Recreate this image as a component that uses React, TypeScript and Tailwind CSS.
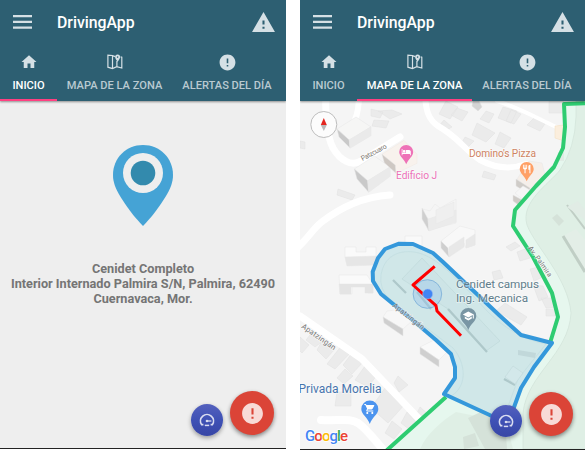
import React from "react";
import { MdHome, MdError, MdWarning, MdHotel, MdRestaurant, MdSchool, MdShoppingCart } from "react-icons/md";

const tabs = [
  { label: "INICIO", width: "w-[57px]" },
  { label: "MAPA DE LA ZONA", width: "w-[115px]" },
  { label: "ALERTAS DEL DÍA", width: "w-[110px]" },
];

function MapIcon() {
  return (
    <svg width="16" height="16" viewBox="0 0 16 16" fill="none" stroke="currentColor" strokeWidth="1.2">
      <path d="M8.2 2.6 5.5 1.5.9 1.2v12l4.6 1.3 4.2-1.8 5.1 1.3V3.2l-1.2-.3M5.5 1.5v13M9.9 7v5.7" />
      <path d="M10.6.6a2.5 2.5 0 0 1 2.5 2.5c0 1.6-2.5 4.8-2.5 4.8S8.1 4.7 8.1 3.1A2.5 2.5 0 0 1 10.6.6z" fill="currentColor" stroke="none" />
      <circle cx="10.6" cy="3.1" r=".8" fill="#2d5f72" stroke="none" />
    </svg>
  );
}

function Header({ active }: { active: number }) {
  return (
    <header className="relative z-10 h-[101px] shrink-0 bg-[#2d5f72] text-[#d5e0e5] shadow-[0_1px_2px_rgba(0,0,0,0.4)]">
      <div className="flex h-[44px] items-center pr-[11px] pl-[13px]">
        <svg width="19" height="14" viewBox="0 0 19 14" fill="currentColor">
          <path d="M0 0h19v2.3H0zM0 5.8h19v2.3H0zM0 11.5h19v2.3H0z" />
        </svg>
        <span className="mt-[2px] ml-[25px] text-[15.8px] font-medium leading-[20px] text-white">DrivingApp</span>
        <MdWarning className="-mr-px ml-auto size-[25px]" />
      </div>
      <div className="flex h-[57px]">
        {tabs.map((tab, i) => (
          <div
            key={tab.label}
            className={`flex shrink-0 flex-col items-center border-b-2 pt-[9px] ${tab.width} ${
              i === active ? "border-[#ff4081]" : "border-transparent"
            }`}
          >
            <div className="flex h-[18px] items-center">
              {i === 0 ? <MdHome className="size-[18px]" /> : i === 1 ? <MapIcon /> : <MdError className="size-[19px]" />}
            </div>
            <span className={`mt-[7px] text-[11.1px] font-medium leading-[16px] whitespace-nowrap ${i === active ? "text-white" : "text-[#b9cad1]"}`}>
              {tab.label}
            </span>
          </div>
        ))}
      </div>
    </header>
  );
}

function FloatingButtons({ className }: { className: string }) {
  return (
    <div className={`absolute flex items-end gap-[7px] ${className}`}>
      <div className="mb-[-1px] flex size-[32px] items-center justify-center rounded-full bg-linear-to-b from-[#5360bd] via-[#3f51b5] to-[#3846a5] shadow-[0_2px_4px_rgba(0,0,0,0.35)]">
        <svg width="16" height="16" viewBox="0 0 16 16" fill="none" stroke="#d9dcf0" strokeWidth="1.7">
          <path d="M4.4 12.6H2.6A6.5 6.5 0 1 1 13.4 12.6H11.6" />
          <path d="M8 9h4.4" strokeWidth="1.3" />
          <path d="M5.8 13.4h4.4" strokeWidth="1.5" />
          <circle cx="8" cy="9" r="1.3" fill="#d9dcf0" stroke="none" />
        </svg>
      </div>
      <div className="flex size-[44px] items-center justify-center rounded-full bg-[#db4437] shadow-[0_2px_4px_rgba(0,0,0,0.45)]">
        <MdError className="size-[25px] text-[#f8dad7]" />
      </div>
    </div>
  );
}

function HomeScreen() {
  return (
    <section className="relative flex h-[449px] w-[286px] flex-col overflow-hidden border-b border-[#222] bg-[#eee]">
      <Header active={0} />
      <div className="flex flex-col items-center pt-[44px]">
        <svg width="60" height="82" viewBox="0 0 60 82">
          <path d="M30 0C13 0 0 13 0 30c0 8 3 14 7 21 6 10 15 22 23 30 8-8 17-20 23-30 4-7 7-13 7-21C60 13 47 0 30 0z" fill="#45a3d5" />
          <circle cx="30" cy="28" r="20" fill="#eee" />
          <circle cx="30" cy="28" r="12.3" fill="#338aad" />
        </svg>
        <p className="mt-[34px] text-center text-[12.7px] font-bold leading-[15px] whitespace-nowrap text-[#757575]">
          Cenidet Completo
          <br />
          Interior Internado Palmira S/N, Palmira, 62490
          <br />
          Cuernavaca, Mor.
        </p>
      </div>
      <FloatingButtons className="right-[12px] bottom-[13px]" />
    </section>
  );
}

const zone =
  "M372.7 271.7 378 258l7-9 14-5.3 14 .3 20 9 10 9 56 53 22 20 31 8-18 24-13 21-8 22-6 13-63-29 11-16v-11l-4-13-15-14-27-23-28-23-8-13z";
const palmira =
  "M590 103H564l1 24-2 21-9 19-18 19-21 24-2 16 20 31 19 36 6 24-8 25-106 55-56 52H590z";

/* Each building is a roof with its shaded wall. */
const buildings = [
  { roof: "M337 129l19-12 15 10-22 13z", wall: "M337 129l12.3 11 .7 8-11-11z", side: "M349.3 140l21.7-13.3v9L350 148.3z" },
  { roof: "M354.3 169l20-13 16 11-22.6 14z", wall: "M354.3 169l13.4 11.7 1 11.6L357 179z", side: "M367.7 180.7l22.6-14v9.6l-21.6 16z" },
];

const roofs = [
  "M378 111l14-1 10 4-12 5zM374 120l15 1-3 7-14-2zM371 109l12 3-3 6-9-2z",
  "M446 101l12 6-8 12-11-5zM457 108l11 4-6 9-11-6zM444 120l8 7-7 4-7-4z",
  "M503 107l14 4-6 12-13-5zM511 110l10 4-7 10-8-3zM536 116l11 5-7 10-13-6z",
  "M486 111l8 3-5 9-9-4zM477 123l18 10-9 9-14-7zM500 132l11 6-7 10-9-4zM465 137l9 4-6 6-7-3z",
  "M484 171l12 4-2 5-12-3zM338 189l17 6-3 5-15-5zM300 141l5 1v7l-5-1z",
  "M506 247l9-5 5 4-9 5zM517 252l8-3 5 9-10 3zM530 269l8-2 5 10-9 4z",
  "M533 285l10 1 5 11-9 4zM541 298h11l4 9-10 1zM546 309h9v7h-9z",
  "M492 272l8-2 3 8-9 2z",
  "M300 337l9 8-7 8-4-4zM313 331l10 10-8 6-9-7zM323 339l12 10-9 10-9-9z",
  "M342 345l10 6-17 18-8-5zM352 353l11 9-11 12-9-9zM345 369l8 7-9 8-7-6z",
  "M365 366l12 9-9 12-13-7zM398 376l10 9-9 7-5-9zM337 392h14v14h-16z",
  "M385 388l21 15-18 20-17-15zM392 421l10 8-8 10-9-6zM407 412l9 10-6 8-9-7zM420 407l9 8-5 5-8-5z",
  "M505 303l22 14-6 8-25-14z",
];

interface MapLabelProps {
  x: number;
  y: number;
  size: number;
  color: string;
  length: number;
  children: string;
  rotate?: number;
}

function MapLabel({ x, y, size, color, length, children, rotate }: MapLabelProps) {
  return (
    <text
      x={x}
      y={y}
      fontSize={size}
      fill={color}
      textLength={length}
      stroke="#fff"
      strokeWidth="1.5"
      strokeOpacity=".5"
      paintOrder="stroke"
      transform={rotate ? `rotate(${rotate} ${x} ${y})` : undefined}
    >
      {children}
    </text>
  );
}

function Pin({ x, y, color, r, children }: { x: number; y: number; color: string; r: number; children: React.ReactNode }) {
  return (
    <g transform={`translate(${x} ${y})`}>
      <path
        d={`M${-r} 0A${r} ${r} 0 1 1 ${r} 0C${r} ${r * 0.65} 2 ${r} 0 ${r * 1.75}C-2 ${r} ${-r} ${r * 0.65} ${-r} 0z`}
        fill={color}
      />
      <g color="#fff">{children}</g>
    </g>
  );
}

function StreetMap() {
  return (
    <svg className="block" width="285" height="348" viewBox="300 101 285 348" fontFamily="Roboto, sans-serif">
      <rect x="300" y="101" width="285" height="348" fill="#f5f5f5" />
      <g fill="#ebebeb" stroke="#e1e1e1" strokeWidth=".5">
        {roofs.map((d) => (
          <path key={d} d={d} />
        ))}
        <path d="M473 101h6l3 6-4 4-6-5z" fill="#d4d4d4" />
        <path d="M549 101h15v12h-15z" />
      </g>
      <g fill="none" stroke="#fff" strokeWidth="8" strokeLinecap="round" strokeLinejoin="round">
        <path d="M326 95C325 112 327 137 333 148 340 160 351 167 361 161L400 137" strokeWidth="7" />
        <path d="M359 95c0 12-2 23-7 30" strokeWidth="6" />
        <path d="M296 249C310 237 312 229 323 221 342 207 362 197 390 195" strokeWidth="7" />
        <path d="M425 95c1 17 4 25 13 31 20 11 27 24 42 34 15 8 30 10 46 4" strokeWidth="6" />
        <path d="M497 101c24 7 43 19 68 30" strokeWidth="4" />
        <path d="M300 316l62 43 59 62 6 9" strokeWidth="7" />
        <path d="M321 420c20 1 29-2 37 3 10 7 18 19 30 32" />
      </g>
      <g stroke="#e6e6e6" strokeWidth=".5">
        {buildings.map((b) => (
          <g key={b.roof}>
            <path d={b.roof} fill="#f6f6f5" />
            <path d={b.wall} fill="#c9c9c9" />
            <path d={b.side} fill="#eaeaea" />
          </g>
        ))}
        <path d="M382 154.300l22-14 13 14v9l-21 10-14-19z" fill="#f8f2ed" stroke="#f1e9e3" />
        <path d="M382 154.300l13.300 10.700.7 8.300-11.700-10.600z" fill="#cec8c3" />
        <path d="M423 209l7 2 5-7 5 4 16-9v24l-28 7z" fill="#f5f5f5" />
        <path d="M422 208l6 11 1 12-7-12z" fill="#cfcfcf" />
        <path d="M428 219l28-9v12l-27 9z" fill="#ebebeb" />
        <path d="M345 247h11v5h10v-5h10v17l-29 1-2-8z" fill="#fafafa" />
        <path d="M345 257l31-1v9l-29 1z" fill="#e6e6e6" />
        <path d="M339 275h28l6 9v9h-5v-7h-16v8h-12z" fill="#fafafa" />
        <path d="M339 284h34v9h-8v-6h-14v7h-11z" fill="#e4e4e4" />
        <path d="M441 241l19-15 15 4v15l-9 3-2-5-15 14-8-11z" fill="#f8f8f8" />
        <path d="M441 241l7 7 1 9-8-9z" fill="#cfcfcf" />
        <path d="M449 247l15-10v10l-15 10zM466 240l9-6v11l-9 3z" fill="#e8e8e8" />
        <path d="M436 210l18-8v14l-18 8z" fill="#efefef" />
        <path d="M405 236h17v11h-17z" fill="#f9f9f9" />
        <path d="M383 317l20 12 10-9-9-11-17 2z" fill="#f7f7f7" />
        <path d="M383 317l20 12v7l-19-13z" fill="#cfcfcf" />
        <path d="M420 347l19 13 10-10-11-12z" fill="#f9f9f9" />
        <path d="M420 347l19 13v7l-19-13z" fill="#cfcfcf" />
        <path d="M517 179l12-18 13 2 3 12-13 16z" fill="#f5efea" />
        <path d="M516 179l14 9-1 6-13-8zM513 195l13 7-1 8-12-9z" fill="#cfccc8" />
        <path d="M515 193l8-7 12 7-8 10z" fill="#f6f6f6" />
        <path d="M555 126l9-1v16l-9-3z" fill="#fbeedd" stroke="#f3ddbd" />
      </g>

      <path d={palmira} fill="#e6f7ee" />
      <path
        d="M576 101V117Q575 148 560 170 C549 184 520 202 527 225 C535 246 568 278 571 313 C569 354 527 374 523 413V449H590V101z"
        fill="#dfefe5"
        stroke="#d1e3d9"
        strokeWidth=".7"
      />
      <path d="M420 449C427 433 442 421 456 412l50 10 7 27z" fill="#dfefe5" />
      <g fill="#d5e2d9">
        <path d="M468 418l23-11 14 15 2 27h-22zM463 437l12-4 4 13-15 3z" />
        <path d="M552 218l5-4 7 7-5 5z" />
        <path d="M563 236l13-7 9 11v31z" fill="#e3eee7" />
        <path d="M563 236l22 36" stroke="#c0cec5" strokeWidth="3" fill="none" />
        <path d="M567 205l18 24" stroke="#c0cec5" strokeWidth="2" fill="none" />
        <path d="M567 207l11-6 7 9v10zM558 152h6v9h-7z" fill="#e1ece5" />
      </g>

      <path d={zone} fill="#cfe7ea" />
      <g clipPath="url(#zone-clip)">
        <path
          d="M381 275C384 257 397 250 414 252 435 255 455 276 487 311 503 327 523 340 546 344L518 379 502 423 447 398C468 390 467 364 453 348L390 300Q379 289 381 275z"
          fill="#d0e7e8"
          stroke="#c2dce0"
          strokeWidth=".7"
        />
        <path d="M402 279l20-21 78 83-14 10-38-42z" fill="#cde4e6" stroke="#bed7d9" strokeWidth=".6" />
        <path d="M393 280l13 13M417 292l14 17M448 309l39 43M504 379l11 6" stroke="#aec8ca" strokeWidth="2.300" />
        <path d="M518 350l18 3-1 5-17-3z" fill="#c1d8da" />
        <path d="M505 377l8-11 10 7-8 11z" fill="#d3e8ea" stroke="#c1d8da" strokeWidth=".6" />
      </g>
      <clipPath id="zone-clip">
        <path d={zone} />
      </clipPath>

      <g fill="none" strokeWidth="4" strokeLinejoin="round">
        <path d="M590 103L564 104l1 23-2 21-9 19-18 19-21 24-2 16 20 31 19 36 6 24-8 26M446 397l-60 54" stroke="#2ecc71" />
        <path d={zone} stroke="#3498db" />
      </g>

      <MapLabel x={362.5} y={161} size={7} color="#77716a" length={28} rotate={-28}>Patzcuaro</MapLabel>
      <MapLabel x={396} y={179} size={10.2} color="#ec71b8" length={41}>Edificio J</MapLabel>
      <MapLabel x={469} y={156.500} size={10.2} color="#cf8362" length={67}>Domino's Pizza</MapLabel>
      <MapLabel x={528} y={248} size={7} color="#777" length={36} rotate={55}>Av. Palmira</MapLabel>
      <MapLabel x={392} y={306.500} size={7.6} color="#777" length={38} rotate={38}>Apatzingán</MapLabel>
      <MapLabel x={301} y={327.500} size={7.6} color="#777" length={40} rotate={35}>Apatzingán</MapLabel>
      <MapLabel x={456} y={288} size={11.7} color="#607d8b" length={83}>Cenidet campus</MapLabel>
      <MapLabel x={456} y={301.500} size={11.7} color="#607d8b" length={72}>Ing. Mecanica</MapLabel>
      <MapLabel x={298.500} y={393.300} size={12} color="#4774ad" length={83}>Privada Morelia</MapLabel>

      <Pin x={406.2} y={152} r={7} color="#ee72b7"><MdHotel x={-5} y={-5} size={10} /></Pin>
      <Pin x={526.7} y={169} r={7} color="#ffa066"><MdRestaurant x={-5} y={-5} size={10} /></Pin>
      <Pin x={468.3} y={316} r={8} color="#7996a4"><MdSchool x={-6} y={-6} size={12} /></Pin>
      <Pin x={369.8} y={409} r={8.5} color="#4c94ef"><MdShoppingCart x={-6} y={-6} size={12} /></Pin>

      <circle cx="427.4" cy="294" r="14.3" fill="#90bfeb" fillOpacity=".36" stroke="#77acd7" strokeWidth=".8" />
      <path d="M434.7 266.3L413 285l23 20.7 1 5.3 24 24.7" fill="none" stroke="#f00" strokeWidth="3" strokeLinejoin="round" />
      <circle cx="427.7" cy="294" r="5" fill="#4285f4" stroke="#9dbff0" strokeWidth=".6" />

      <circle cx="323.8" cy="124.5" r="13" fill="#fcfcfc" stroke="#bdbdbd" />
      <path d="M323.8 118l3 7h-6z" fill="#e3261f" />
      <path d="M323.8 131l3-6h-6z" fill="#bababa" />
      <text x="305" y="440.500" fontSize="15" fontWeight="500" textLength="43" stroke="#fff" strokeWidth="1.5" paintOrder="stroke">
        <tspan fill="#4285f4">G</tspan>
        <tspan fill="#ea4335">o</tspan>
        <tspan fill="#fbbc05">o</tspan>
        <tspan fill="#4285f4">g</tspan>
        <tspan fill="#34a853">l</tspan>
        <tspan fill="#ea4335">e</tspan>
      </text>
    </svg>
  );
}

function MapScreen() {
  return (
    <section className="relative flex h-[450px] w-[285px] flex-col overflow-hidden border-b border-[#222] bg-[#f5f5f5]">
      <Header active={1} />
      <StreetMap />
      <FloatingButtons className="right-[12px] bottom-[13px]" />
    </section>
  );
}

export default function App() {
  return (
    <main className="flex h-[451px] w-[586px] gap-[14px] overflow-hidden bg-white font-[Roboto,sans-serif]">
      <HomeScreen />
      <MapScreen />
    </main>
  );
}
